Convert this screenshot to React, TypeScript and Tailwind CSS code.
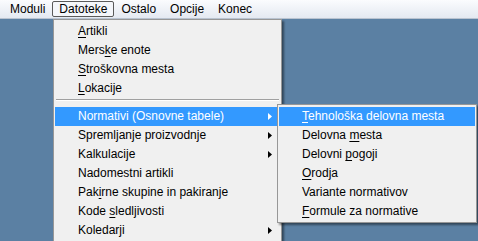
import React from "react";

type Item = { label: React.ReactNode; arrow?: boolean; active?: boolean } | "sep";

const U = ({ c }: { c: string }) => <span className="underline underline-offset-2">{c}</span>;

const mainItems: Item[] = [
  { label: <><U c="A" />rtikli</> },
  { label: <>Mers<U c="k" />e enote</> },
  { label: <><U c="S" />troškovna mesta</> },
  { label: <><U c="L" />okacije</> },
  "sep",
  { label: <>Normativi (Osnovne tabele)</>, arrow: true, active: true },
  { label: <>Spremljanje proizvodnje</>, arrow: true },
  { label: <>Kalkulacije</>, arrow: true },
  { label: <>Nadomestni artikli</> },
  { label: <>Pak<U c="i" />rne skupine in pakiranje</> },
  { label: <>Kode <U c="s" />ledljivosti</> },
  { label: <>Koledarji</>, arrow: true },
];

const subItems: Item[] = [
  { label: <><U c="T" />ehnološka delovna mesta</>, active: true },
  { label: <>Delovna <U c="m" />esta</> },
  { label: <>Delovni <U c="p" />ogoji</> },
  { label: <><U c="O" />rodja</> },
  { label: <>Variante normativov</> },
  { label: <><U c="F" />ormule za normative</> },
];

function Arrow({ white }: { white?: boolean }) {
  return (
    <svg width="4" height="7" viewBox="0 0 4 7" className="absolute right-[8px] top-[6px]">
      <path d="M0 0 L4 3.5 L0 7 Z" fill={white ? "#ffffff" : "#000000"} />
    </svg>
  );
}

function Row({ item, textLeft }: { item: Exclude<Item, "sep">; textLeft: number }) {
  return (
    <div
      className={
        "relative h-[19px] leading-[19px] whitespace-nowrap " +
        (item.active ? "bg-[#3399ff] text-white" : "text-black")
      }
      style={{ paddingLeft: textLeft }}
    >
      {item.label}
      {item.arrow && <Arrow white={item.active} />}
    </div>
  );
}

export default function App() {
  const bar = ["Moduli", "Datoteke", "Ostalo", "Opcije", "Konec"];
  return (
    <div
      className="w-[478px] h-[241px] overflow-hidden flex flex-col bg-[#5b80a3] text-[12px]"
      style={{ fontFamily: '"Liberation Sans", Arial, sans-serif' }}
    >
      <div className="h-[19px] flex items-center pl-[3px] bg-gradient-to-b from-[#fbfcfe] to-[#e4e9f1] border-b border-[#b9c3d0] shrink-0">
        {bar.map((b) => (
          <div
            key={b}
            className={
              "h-[16px] leading-[14px] px-[6px] border rounded-[2px] " +
              (b === "Datoteke" ? "border-[#5a5a5a] bg-[#f4f6fa]" : "border-transparent")
            }
          >
            {b}
          </div>
        ))}
      </div>
      <div className="relative flex-1">
        {/* main dropdown */}
        <div className="absolute left-[53px] top-0 w-[229px] h-[240px] bg-[#f0f0f0] border border-[#979797] pt-[2px] px-[1px] shadow-[2px_2px_2px_rgba(0,0,0,0.45)]">
          {mainItems.map((it, i) =>
            it === "sep" ? (
              <div key={i} className="pt-[1px] pb-[6px] px-[1px]">
                <div className="h-[1px] bg-[#a0a0a0]" />
                <div className="h-[1px] bg-white" />
              </div>
            ) : (
              <Row key={i} item={it} textLeft={23} />
            )
          )}
        </div>
        {/* submenu */}
        <div className="absolute left-[277px] top-[85px] w-[200px] bg-[#f0f0f0] border border-[#979797] pt-[2px] pb-[1px] px-[1px] shadow-[2px_2px_2px_rgba(0,0,0,0.45)]">
          {subItems.map((it, i) =>
            it === "sep" ? null : <Row key={i} item={it} textLeft={23} />
          )}
        </div>
      </div>
    </div>
  );
}
